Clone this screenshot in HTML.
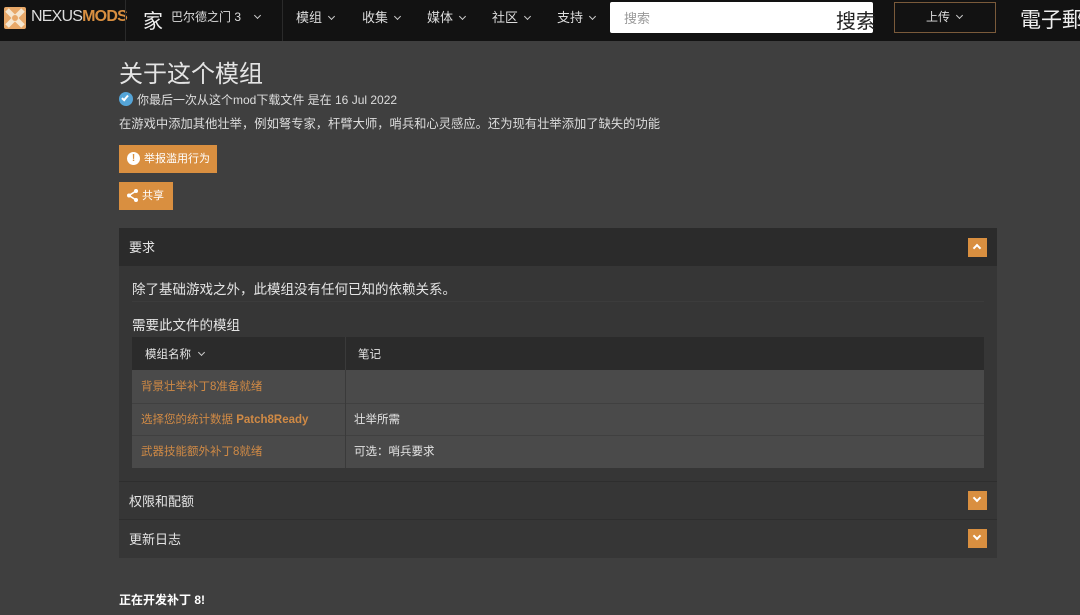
<!DOCTYPE html>
<html><head><meta charset="utf-8"><style>
*{box-sizing:border-box;margin:0;padding:0}
body{width:1080px;height:615px;overflow:hidden;background:#3f3f3f;font-family:"Liberation Sans","Noto Sans CJK SC",sans-serif;color:#e0e0e0;position:relative}
.nav{position:absolute;left:0;top:0;width:1080px;height:41px;background:#121212}
.a{position:absolute;white-space:nowrap}
.chev{display:inline-block;width:5px;height:5px;border-right:1.5px solid #ccc;border-bottom:1.5px solid #ccc;transform:rotate(45deg);margin-left:7px;vertical-align:3px}
.ni{font-size:13px;color:#ddd;top:7px}
.btn{position:absolute;background:#d98f40;color:#fff;font-size:11px;height:28px;line-height:28px;padding-left:25px}
.tg{position:absolute;left:968px;width:19px;height:19px;background:#d98f40}
.tg i{position:absolute;left:6px;width:6px;height:6px;border-left:2px solid #fff;border-top:2px solid #fff}
</style></head><body>
<div class="nav">
 <svg class="a" style="left:4px;top:7px" width="22" height="22" viewBox="0 0 22 22"><rect width="22" height="22" rx="2" fill="#e8a868"/><path d="M3 3L19 19M19 3L3 19" stroke="#f5e6d0" stroke-width="5"/><circle cx="11" cy="11" r="3" fill="#e8a868"/></svg>
 <div class="a" style="left:31px;top:8px;font-size:16px;color:#ddd;letter-spacing:-0.8px">NEXUS<b style="color:#d98f40">MODS</b></div>
 <div class="a" style="left:125px;top:0;width:1px;height:41px;background:#2a2a2a"></div>
 <div class="a" style="left:143px;top:5px;font-size:20px;color:#eee">家</div>
 <div class="a" style="left:171px;top:8px;font-size:12px;color:#ddd">巴尔德之门 3<span class="chev" style="margin-left:14px"></span></div>
 <div class="a" style="left:282px;top:0;width:1px;height:41px;background:#2a2a2a"></div>
 <div class="a ni" style="left:296px">模组<span class="chev"></span></div>
 <div class="a ni" style="left:362px">收集<span class="chev"></span></div>
 <div class="a ni" style="left:427px">媒体<span class="chev"></span></div>
 <div class="a ni" style="left:492px">社区<span class="chev"></span></div>
 <div class="a ni" style="left:557px">支持<span class="chev"></span></div>
 <div class="a" style="left:610px;top:2px;width:263px;height:31px;background:#fff;border-radius:2px"></div>
 <div class="a" style="left:624px;top:8px;font-size:13px;color:#999">搜索</div>
 <div class="a" style="left:836px;top:5px;font-size:20px;color:#222">搜索</div>
 <div class="a" style="left:894px;top:2px;width:102px;height:31px;border:1px solid #7a5a3a"></div>
 <div class="a" style="left:926px;top:8px;font-size:12px;color:#ddd">上传<span class="chev"></span></div>
 <div class="a" style="left:1020px;top:4px;font-size:21px;color:#eee">電子郵</div>
</div>
<div class="a" style="left:119px;top:54px;font-size:24px;color:#e4e4e4">关于这个模组</div>
<div class="a" style="left:119px;top:92px;width:14px;height:14px;border-radius:50%;background:#55a5d8"></div>
<div class="a" style="left:123px;top:94px;width:4px;height:7px;border-right:2px solid #fff;border-bottom:2px solid #fff;transform:rotate(40deg)"></div>
<div class="a" style="left:137px;top:91px;font-size:12px;color:#ddd">你最后一次从这个mod下载文件 是在 16 Jul 2022</div>
<div class="a" style="left:119px;top:114px;font-size:12.3px;color:#ddd">在游戏中添加其他壮举，例如弩专家，杆臂大师，哨兵和心灵感应。还为现有壮举添加了缺失的功能</div>
<div class="btn" style="left:119px;top:145px;width:98px">举报滥用行为</div>
<div class="a" style="left:127px;top:152px;width:13px;height:13px;border-radius:50%;background:#fff;color:#d98f40;font-size:10px;font-weight:bold;text-align:center;line-height:13px">!</div>
<div class="btn" style="left:119px;top:182px;width:54px;padding-left:23px">共享</div>
<svg class="a" style="left:126px;top:189px" width="13" height="13" viewBox="0 0 13 13"><path d="M10 2L3 6.5L10 11" stroke="#fff" stroke-width="1.6" fill="none"/><circle cx="10" cy="2" r="2" fill="#fff"/><circle cx="3" cy="6.5" r="2" fill="#fff"/><circle cx="10" cy="11" r="2" fill="#fff"/></svg>

<div class="a" style="left:119px;top:228px;width:878px;height:330px;background:#363636"></div>
<div class="a" style="left:119px;top:228px;width:878px;height:38px;background:#2b2b2b"></div>
<div class="a" style="left:129px;top:237px;font-size:13px;color:#e4e4e4">要求</div>
<div class="tg" style="top:238px"><i style="top:7px;transform:rotate(45deg)"></i></div>
<div class="a" style="left:132px;top:278px;font-size:13.5px;color:#e4e4e4">除了基础游戏之外，此模组没有任何已知的依赖关系。</div>
<div class="a" style="left:132px;top:301px;width:852px;height:1px;background:#3c3c3c"></div>
<div class="a" style="left:132px;top:314px;font-size:13.5px;color:#e4e4e4">需要此文件的模组</div>
<div class="a" style="left:132px;top:337px;width:852px;height:33px;background:#2b2b2b"></div>
<div class="a" style="left:132px;top:370px;width:852px;height:98px;background:#4a4a4a"></div>
<div class="a" style="left:132px;top:403px;width:852px;height:1px;background:#404040"></div>
<div class="a" style="left:132px;top:435px;width:852px;height:1px;background:#404040"></div>
<div class="a" style="left:345px;top:337px;width:1px;height:131px;background:#3a3a3a"></div>
<div class="a" style="left:145px;top:346px;font-size:11.5px;color:#e4e4e4">模组名称<span class="chev" style="margin-left:8px"></span></div>
<div class="a" style="left:358px;top:346px;font-size:11.5px;color:#e4e4e4">笔记</div>
<div class="a" style="left:141px;top:378px;font-size:11.5px;color:#d08a45">背景壮举补丁8准备就绪</div>
<div class="a" style="left:141px;top:411px;font-size:11.5px;color:#d08a45">选择您的统计数据 <b>Patch8Ready</b></div>
<div class="a" style="left:354px;top:411px;font-size:11.5px;color:#e4e4e4">壮举所需</div>
<div class="a" style="left:141px;top:443px;font-size:11.5px;color:#d08a45">武器技能额外补丁8就绪</div>
<div class="a" style="left:354px;top:443px;font-size:11.5px;color:#e4e4e4">可选：哨兵要求</div>
<div class="a" style="left:119px;top:481px;width:878px;height:1px;background:#2e2e2e"></div>
<div class="a" style="left:129px;top:491px;font-size:13px;color:#e4e4e4">权限和配额</div>
<div class="tg" style="top:491px"><i style="top:4px;transform:rotate(225deg)"></i></div>
<div class="a" style="left:119px;top:519px;width:878px;height:1px;background:#2e2e2e"></div>
<div class="a" style="left:129px;top:529px;font-size:13px;color:#e4e4e4">更新日志</div>
<div class="tg" style="top:529px"><i style="top:4px;transform:rotate(225deg)"></i></div>
<div class="a" style="left:119px;top:591px;font-size:12px;font-weight:bold;color:#fff">正在开发补丁 8!</div>
</body></html>
